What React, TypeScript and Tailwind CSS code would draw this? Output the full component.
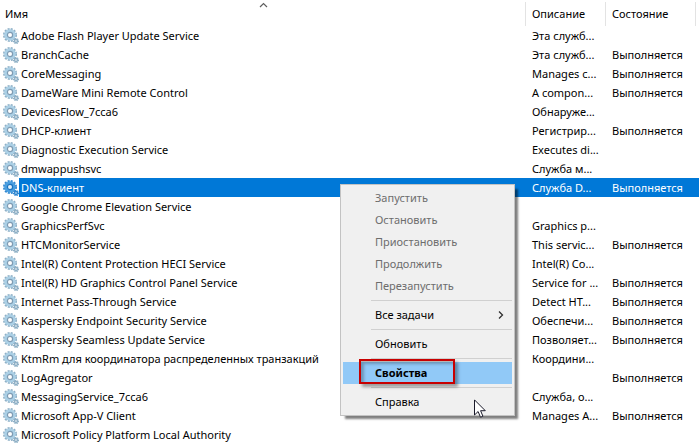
type Service = { name: string; description: string; running: boolean };

const services: Service[] = [
  { name: "Adobe Flash Player Update Service", description: "Эта служб...", running: false },
  { name: "BranchCache", description: "Эта служб...", running: true },
  { name: "CoreMessaging", description: "Manages c...", running: true },
  { name: "DameWare Mini Remote Control", description: "A compon...", running: true },
  { name: "DevicesFlow_7cca6", description: "Обнаруже...", running: false },
  { name: "DHCP-клиент", description: "Регистрир...", running: true },
  { name: "Diagnostic Execution Service", description: "Executes di...", running: false },
  { name: "dmwappushsvc", description: "Служба м...", running: false },
  { name: "DNS-клиент", description: "Служба D...", running: true },
  { name: "Google Chrome Elevation Service", description: "", running: false },
  { name: "GraphicsPerfSvc", description: "Graphics p...", running: false },
  { name: "HTCMonitorService", description: "This servic...", running: true },
  { name: "Intel(R) Content Protection HECI Service", description: "Intel(R) Co...", running: false },
  { name: "Intel(R) HD Graphics Control Panel Service", description: "Service for ...", running: true },
  { name: "Internet Pass-Through Service", description: "Detect HT...", running: true },
  { name: "Kaspersky Endpoint Security Service", description: "Обеспечи...", running: true },
  { name: "Kaspersky Seamless Update Service", description: "Позволяет...", running: true },
  { name: "KtmRm для координатора распределенных транзакций", description: "Координи...", running: false },
  { name: "LogAgregator", description: "", running: true },
  { name: "MessagingService_7cca6", description: "Служба, о...", running: false },
  { name: "Microsoft App-V Client", description: "Manages A...", running: true },
  { name: "Microsoft Policy Platform Local Authority", description: "", running: false },
];

const selectedName = "DNS-клиент";

function GearsIcon({ selected }: { selected: boolean }) {
  const teeth = selected ? "#2f86cf" : "#8fb0c6";
  const body = selected ? "#4a9fe0" : "#abd0e6";
  const ring = selected ? "#1a74c0" : "#7e9bb3";
  const hole = selected ? "#e4f1fb" : "#fff";
  return (
    <svg width="16" height="16" viewBox="0 0 16 16" aria-hidden="true" className="block">
      <circle cx="7" cy="7" r="6" fill="none" stroke={teeth} strokeWidth="2" strokeDasharray="2 1.14" />
      <circle cx="7" cy="7" r="4.2" fill="none" stroke={body} strokeWidth="3.2" />
      <circle cx="7" cy="7" r="2.6" fill={hole} stroke={ring} strokeWidth="1.2" />
      <circle cx="13" cy="13" r="2.4" fill="none" stroke={teeth} strokeWidth="1.4" strokeDasharray="1.1 0.78" />
      <circle cx="13" cy="13" r="1.5" fill={hole} stroke={teeth} strokeWidth="1.4" />
    </svg>
  );
}

function MenuItem({ label, disabled = false }: { label: string; disabled?: boolean }) {
  return (
    <button
      type="button"
      role="menuitem"
      disabled={disabled}
      className="flex h-[22px] w-full items-center pl-8 text-left disabled:text-[#6d6d6d]"
    >
      {label}
    </button>
  );
}

function Separator() {
  return <div role="separator" className="my-[3px] ml-7 h-px bg-[#d0d0d0]" />;
}

function ContextMenu() {
  return (
    <div
      role="menu"
      className="absolute top-[184px] left-[340px] w-[175px] border border-[#c3c3c3] bg-[#f0f0f0] p-[2px] leading-[18px] shadow-[4px_4px_2px_-1px_rgba(0,0,0,0.5)]"
    >
      <MenuItem label="Запустить" disabled />
      <MenuItem label="Остановить" disabled />
      <MenuItem label="Приостановить" disabled />
      <MenuItem label="Продолжить" disabled />
      <MenuItem label="Перезапустить" disabled />
      <Separator />
      <button
        type="button"
        role="menuitem"
        aria-haspopup="menu"
        className="flex h-[22px] w-full items-center justify-between pr-2 pl-8 text-left"
      >
        Все задачи
        <svg width="6" height="8" viewBox="0 0 6 8" aria-hidden="true">
          <path d="M1 .5L4.500 4L1 7.500" fill="none" stroke="#303030" strokeWidth="1.300" />
        </svg>
      </button>
      <Separator />
      <MenuItem label="Обновить" />
      <Separator />
      <button
        type="button"
        role="menuitem"
        className="relative flex h-[22px] w-full items-center bg-[#91c9f7] pl-8 text-left font-bold"
      >
        Свойства
        <span className="absolute -top-[3px] left-4 h-[25px] w-24 border-2 border-[#c80000] shadow-[3px_3px_3px_rgba(0,0,0,0.35),inset_3px_3px_3px_rgba(0,0,0,0.25)]" />
      </button>
      <Separator />
      <MenuItem label="Справка" />
    </div>
  );
}

function Cursor() {
  return (
    <svg width="12" height="19" viewBox="0 0 12 19" aria-hidden="true" className="absolute top-[399px] left-[474px]">
      <path
        d="M.5 .9V16l3.6-3.5L6.5 18.2l2.4-1L6.6 11.7h4.7z"
        fill="#fff"
        stroke="#1a1a2a"
        strokeWidth="1"
      />
    </svg>
  );
}

export default function App() {
  return (
    <main className="relative bg-white font-['Noto_Sans','Open_Sans',sans-serif] text-[11px] leading-[19px] text-black">
      <table className="w-full table-fixed border-collapse whitespace-nowrap">
        <colgroup>
          <col className="w-[19px]" />
          <col />
          <col className="w-20" />
          <col className="w-[90px]" />
          <col className="w-[3px]" />
        </colgroup>
        <thead>
          <tr className="h-[26px] text-left">
            <th colSpan={2} className="p-0 font-normal" aria-sort="ascending">
              <div className="relative mt-px h-6 border-r border-[#e3e3e3] pl-[5px] leading-6">
                Имя
                <svg
                  width="9"
                  height="6"
                  viewBox="0 0 9 6"
                  aria-hidden="true"
                  className="absolute top-0 left-1/2 -ml-1"
                >
                  <path d="M1 5L4.500 1.500L8 5" fill="none" stroke="#5f5f5f" strokeWidth="1.200" />
                </svg>
              </div>
            </th>
            <th className="p-0 font-normal">
              <div className="mt-px h-6 border-r border-[#e3e3e3] pl-[6px] leading-6">Описание</div>
            </th>
            <th className="p-0 font-normal">
              <div className="mt-px h-6 border-r border-[#e3e3e3] pl-[6px] leading-6">Состояние</div>
            </th>
            <td className="p-0" />
          </tr>
        </thead>
        <tbody>
          {services.map((service) => {
            const selected = service.name === selectedName;
            const cell = selected ? "bg-[#0078d7] p-0 text-white" : "p-0";
            return (
              <tr key={service.name} className="h-[19px]" aria-selected={selected}>
                <td className="p-0 pl-[3px]">
                  <GearsIcon selected={selected} />
                </td>
                <td className={cell}>
                  <div className="pl-[2px]">{service.name}</div>
                </td>
                <td className={cell}>
                  <div className="pl-[6px]">{service.description}</div>
                </td>
                <td className={cell}>
                  <div className="pl-[6px]">{service.running ? "Выполняется" : ""}</div>
                </td>
                <td className={cell} />
              </tr>
            );
          })}
        </tbody>
      </table>
      <ContextMenu />
      <Cursor />
    </main>
  );
}
